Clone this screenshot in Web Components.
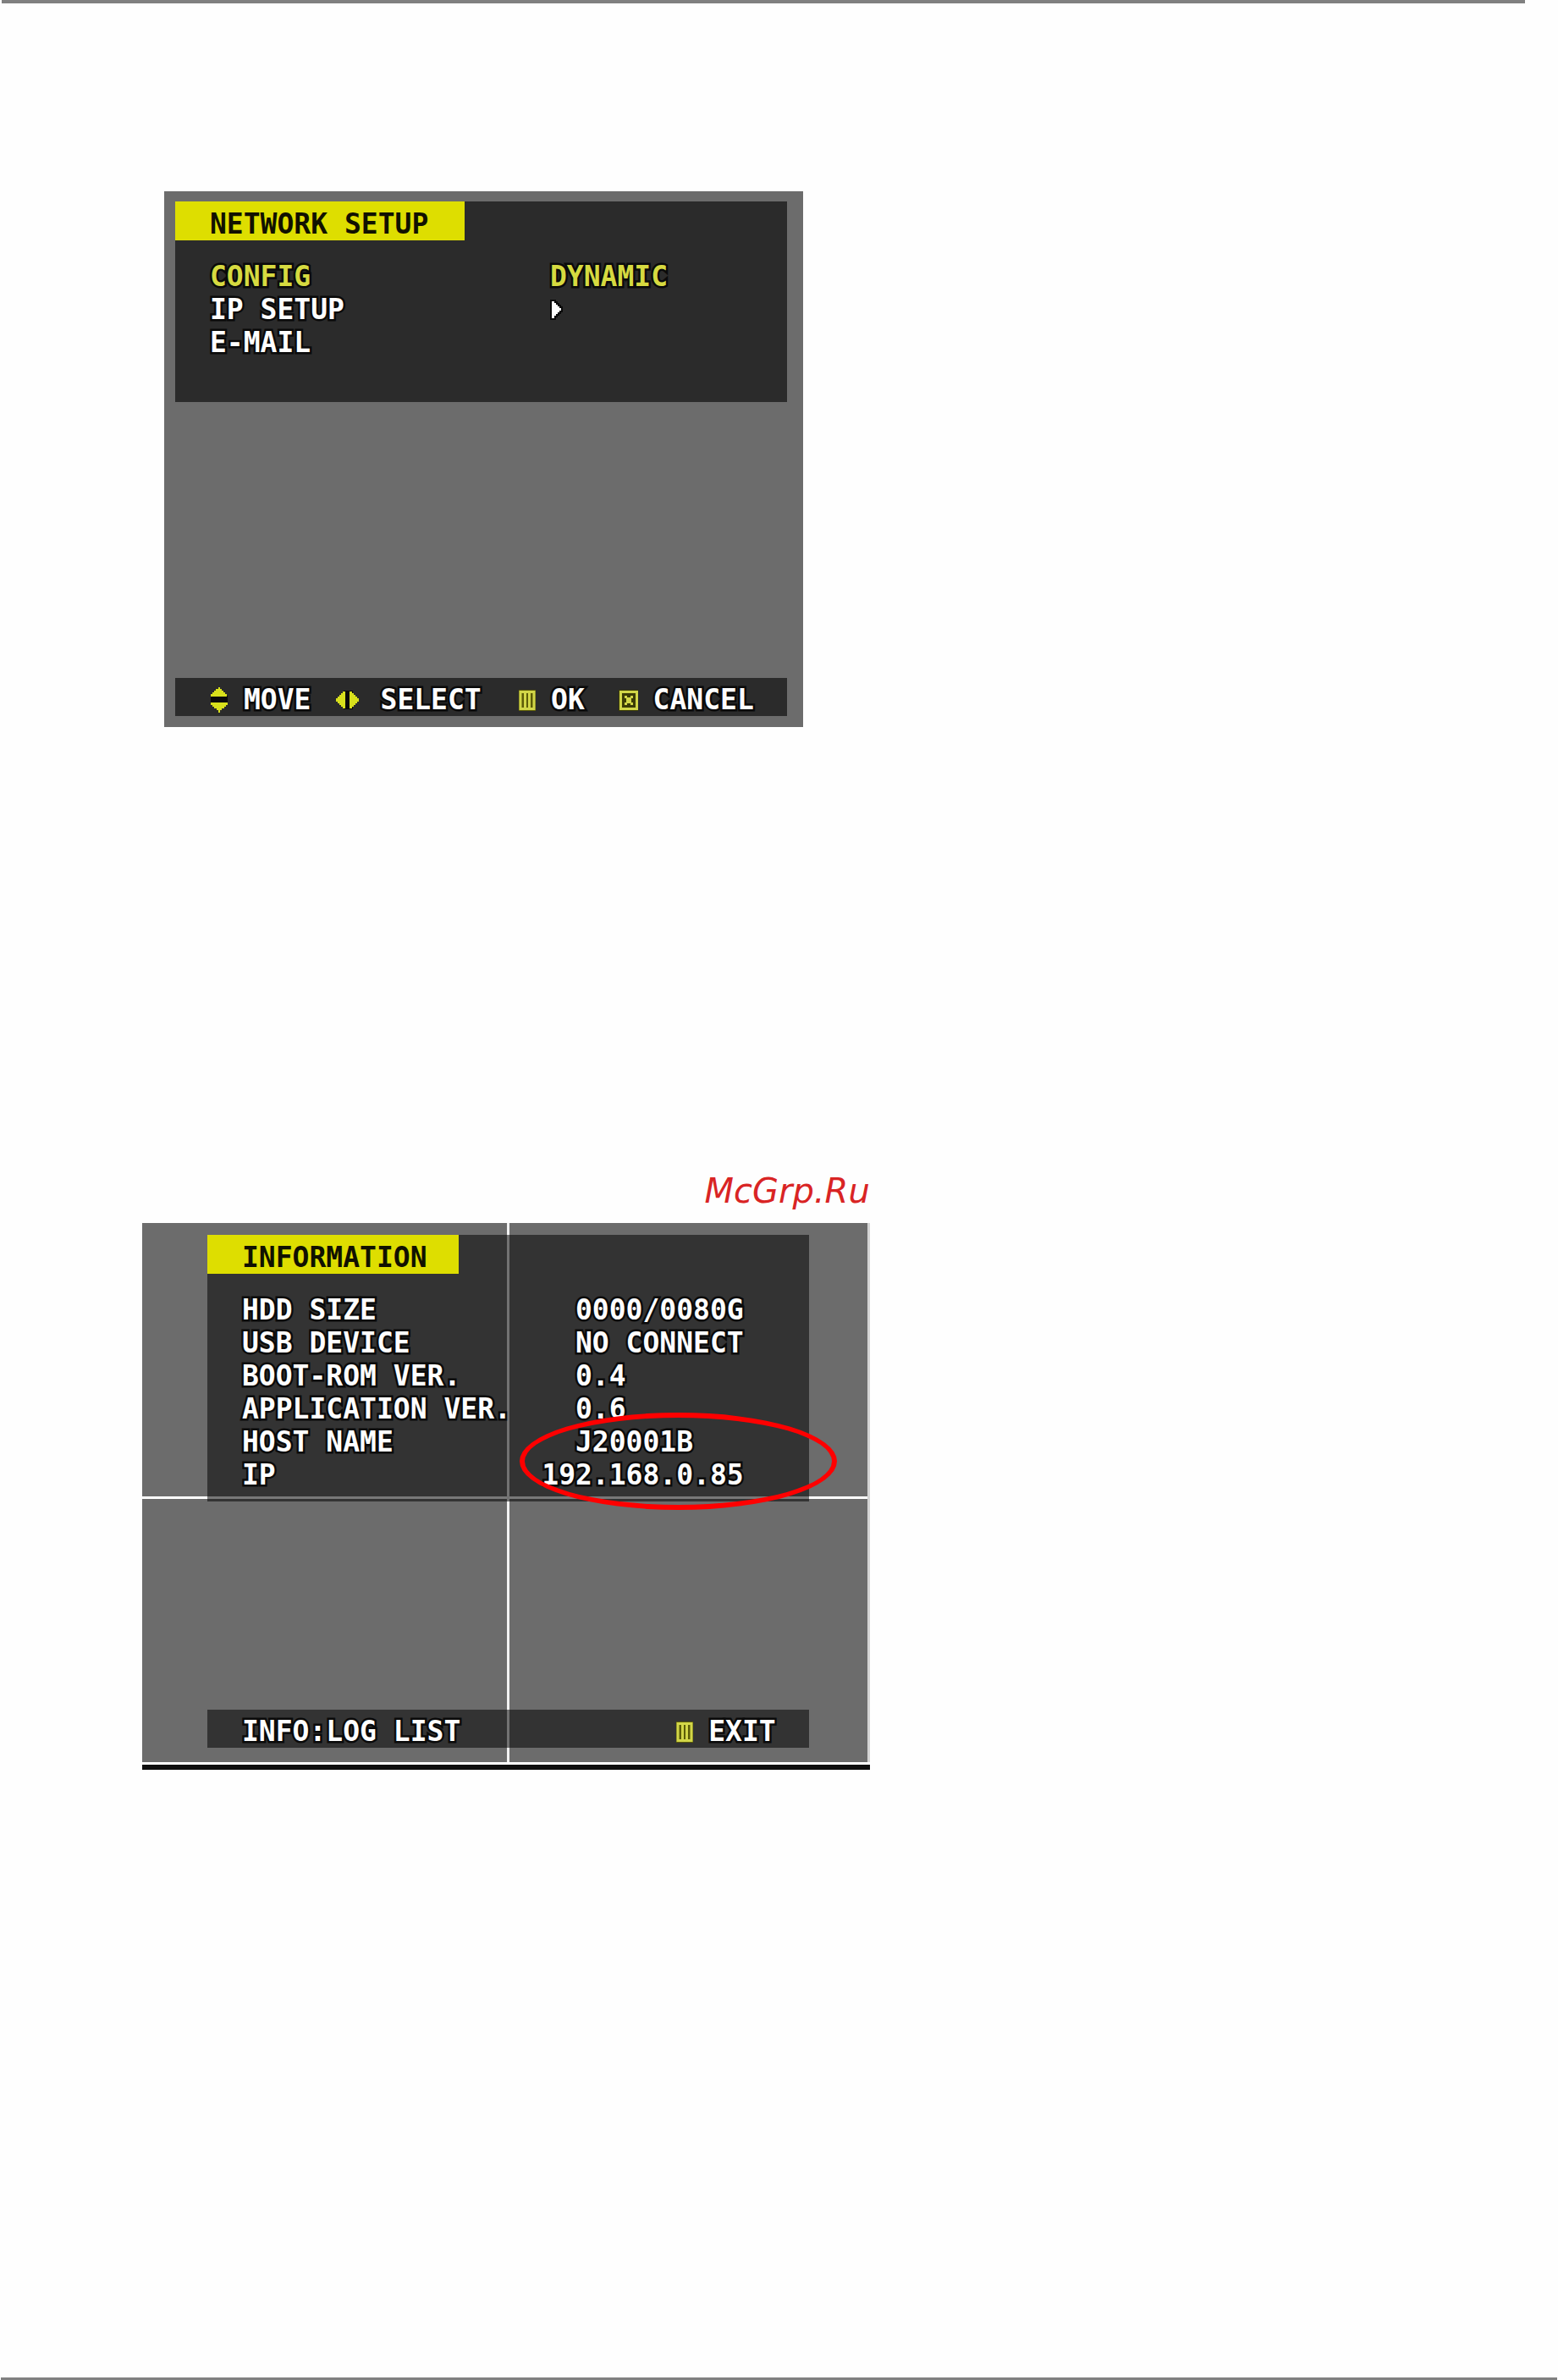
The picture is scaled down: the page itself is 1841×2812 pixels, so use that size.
<!DOCTYPE html>
<html lang="en">
<head>
<meta charset="utf-8">
<title>Network setup</title>
<style>
  body { margin: 0; background: #fefefe; }
</style>
</head>
<body>
<manual-page>
  <osd-screen class="setup">
    <osd-panel heading="NETWORK SETUP">
      <osd-row label="CONFIG" active>DYNAMIC</osd-row>
      <osd-row label="IP SETUP"><osd-icon name="submenu"></osd-icon></osd-row>
      <osd-row label="E-MAIL"></osd-row>
    </osd-panel>
    <osd-bar slot="footer" class="keys">
      <osd-hint icon="updown">MOVE</osd-hint>
      <osd-hint icon="leftright">SELECT</osd-hint>
      <osd-hint icon="menu">OK</osd-hint>
      <osd-hint icon="close">CANCEL</osd-hint>
    </osd-bar>
  </osd-screen>

  <site-mark>McGrp.Ru</site-mark>

  <osd-screen class="info" quad>
    <osd-panel heading="INFORMATION">
      <osd-row label="HDD SIZE">0000/0080G</osd-row>
      <osd-row label="USB DEVICE">NO CONNECT</osd-row>
      <osd-row label="BOOT-ROM VER.">0.4</osd-row>
      <osd-row label="APPLICATION VER.">0.6</osd-row>
      <osd-row label="HOST NAME">J20001B</osd-row>
      <osd-row label="IP" outdent>192.168.0.85</osd-row>
    </osd-panel>
    <osd-bar slot="footer">
      <osd-hint>INFO:LOG LIST</osd-hint>
      <osd-hint icon="menu">EXIT</osd-hint>
    </osd-bar>
    <highlight-ring slot="overlay"></highlight-ring>
  </osd-screen>
</manual-page>

<script>
const define = (name, css, html, setup) => {
  customElements.define(name, class extends HTMLElement {
    constructor() {
      super();
      this.attachShadow({ mode: 'open' });
    }
    connectedCallback() {
      this.shadowRoot.innerHTML = `<style>${css}</style>${html}`;
      if (setup) setup(this, this.shadowRoot);
    }
  });
};

const icons = {
  updown: [22, 32, `
    <rect x="1" y="11" width="20" height="11" fill="#0a0a0a"/>
    <path d="M11 1h1v2h2v2h2v2h2v2h2v3H1V9h2V7h2V5h2V3h3V1z" fill="#d8e01c"/>
    <path d="M1 19h20v3h-2v2h-2v2h-3v2h-2v3h-2v-3H8v-2H5v-2H3v-2H1z" fill="#d8e01c"/>`],
  leftright: [35, 24, `
    <rect x="9" y="1" width="11" height="22" fill="#0a0a0a"/>
    <path d="M0 10h2V8h2V6h2V4h2V2h3v20H8v-2H6v-2H4v-2H2v-2H0z" fill="#d8e01c"/>
    <path d="M16 2h3v2h2v2h2v2h2v2h2v4h-2v2h-2v2h-2v2h-2v2h-3z" fill="#d8e01c"/>`],
  menu: [20, 26, `
    <rect x="0" y="1" width="20" height="25" fill="#5c5c08"/>
    <path d="M2 3.5h16v20H2zM7.5 4v19M12.5 4v19" fill="none" stroke="#d2d648" stroke-width="3"/>`],
  close: [22, 26, `
    <rect x="-1" y="1" width="23" height="25" fill="#3c3c06"/>
    <rect x="1.5" y="3.5" width="19" height="20" fill="none" stroke="#d2d648" stroke-width="3"/>
    <path d="M6 8h3v2h4V8h3v3h-2v5h2v3h-3v-2H9v2H6v-3h2v-5H6z" fill="#d2d648"/>`],
  submenu: [16, 26, `
    <path d="M2 3h3v2h2v2h2v2h2v2h2v3h-2v2H9v2H7v2H5v3H2z" fill="#fff" stroke="#0a0a0a" stroke-width="4" paint-order="stroke"/>`]
};

define('manual-page', `
  :host { display: flex; flex-direction: column; min-height: 100vh; }
  hr { border: 0; margin: 0; background: #808080; flex: none; }
  .top { height: 4px; margin: 0 39px 0 2px; }
  .bottom { height: 3px; margin: auto 1px 0; }
  main { padding: 222px 0 96px; }
  ::slotted(.setup) {
    width: 41%; margin-left: 194px; padding: 12px 19px 13px 13px;
    --space: 326px; --value-x: 402px; --tag-end: 43px; --panel-end: 51px; --panel: #2b2b2b;
  }
  ::slotted(.info) {
    width: 46.7%; margin-left: 168px; padding: 14px 72px 20px 77px;
    --space: 246px; --value-x: 394px; --tag-end: 37px; --panel-end: 12px; --panel: rgba(0, 0, 0, .53);
  }
  ::slotted(site-mark) { width: 46.7%; margin: 524px 0 14px 168px; }
`, `<hr class="top"><main><slot></slot></main><hr class="bottom">`);

define('osd-screen', `
  :host {
    display: block; box-sizing: border-box; min-width: max-content; position: relative;
    background: #6c6c6c; color: #fff;
    font: bold 33px/39px "DejaVu Sans Mono", "Liberation Mono", monospace;
  }
  :host([quad]) {
    background:
      linear-gradient(#fff, #fff) 0 100% / 100% 3px no-repeat,
      linear-gradient(#d4d4d4, #d4d4d4) 100% 0 / 3px 100% no-repeat,
      linear-gradient(#f2f2f2, #f2f2f2) 50.3% 0 / 3px 100% no-repeat,
      linear-gradient(#fff, #fff) 0 50.7% / 100% 3px no-repeat,
      #6c6c6c;
    box-shadow: 0 6px #0e0e0e;
  }
  .stack { display: flex; flex-direction: column; gap: var(--space); }
`, `<div class="stack"><slot></slot><slot name="footer"></slot></div><slot name="overlay"></slot>`);

define('osd-panel', `
  :host { display: block; background: var(--panel); padding-bottom: var(--panel-end); }
  h2 {
    width: max-content; margin: 0 0 23px; padding: 7px var(--tag-end) 0 41px;
    background: #dede00; color: #111100; font: inherit;
  }
  .rows { padding-left: 41px; }
`, `<h2></h2><div class="rows"><slot></slot></div>`,
(host, root) => { root.querySelector('h2').textContent = host.getAttribute('heading'); });

const outlined = '-webkit-text-stroke: 5px #0a0a0a; paint-order: stroke fill; white-space: nowrap;';

define('osd-row', `
  :host { display: grid; grid-template-columns: var(--value-x) auto; height: 39px; ${outlined} }
  :host([active]) { color: #d6da40; }
  :host([outdent]) .value { margin-left: -2ch; }
`, `<span class="label"></span><span class="value"><slot></slot></span>`,
(host, root) => { root.querySelector('.label').textContent = host.getAttribute('label'); });

define('osd-bar', `
  :host {
    display: flex; justify-content: space-between; align-items: center;
    padding: 6px 39px 0 41px; background: var(--panel);
  }
  :host(.keys) { display: grid; grid-template-columns: 147px 215px 117px auto; }
`, `<slot></slot>`);

define('osd-hint', `
  :host { display: flex; align-items: center; gap: 18px; ${outlined} }
`, `<slot></slot>`,
(host, root) => {
  if (!host.hasAttribute('icon')) return;
  const icon = document.createElement('osd-icon');
  icon.setAttribute('name', host.getAttribute('icon'));
  root.querySelector('slot').before(icon);
});

define('osd-icon', `
  :host { display: flex; align-items: center; height: 39px; }
  svg { display: block; overflow: visible; }
`, '', (host, root) => {
  const [w, h, shapes] = icons[host.getAttribute('name')];
  root.innerHTML += `<svg width="${w}" height="${h}" viewBox="0 0 ${w} ${h}" aria-hidden="true">${shapes}</svg>`;
});

define('site-mark', `
  :host {
    display: block; text-align: right; color: #d92424;
    font: italic 40px/48px "DejaVu Sans", sans-serif;
  }
`, `<slot></slot>`);

define('highlight-ring', `
  :host {
    position: absolute; left: 446px; top: 224px; width: 375px; height: 115px;
    box-sizing: border-box; border: 6px solid #f00; border-radius: 50%;
  }
`, '');
</script>
</body>
</html>
